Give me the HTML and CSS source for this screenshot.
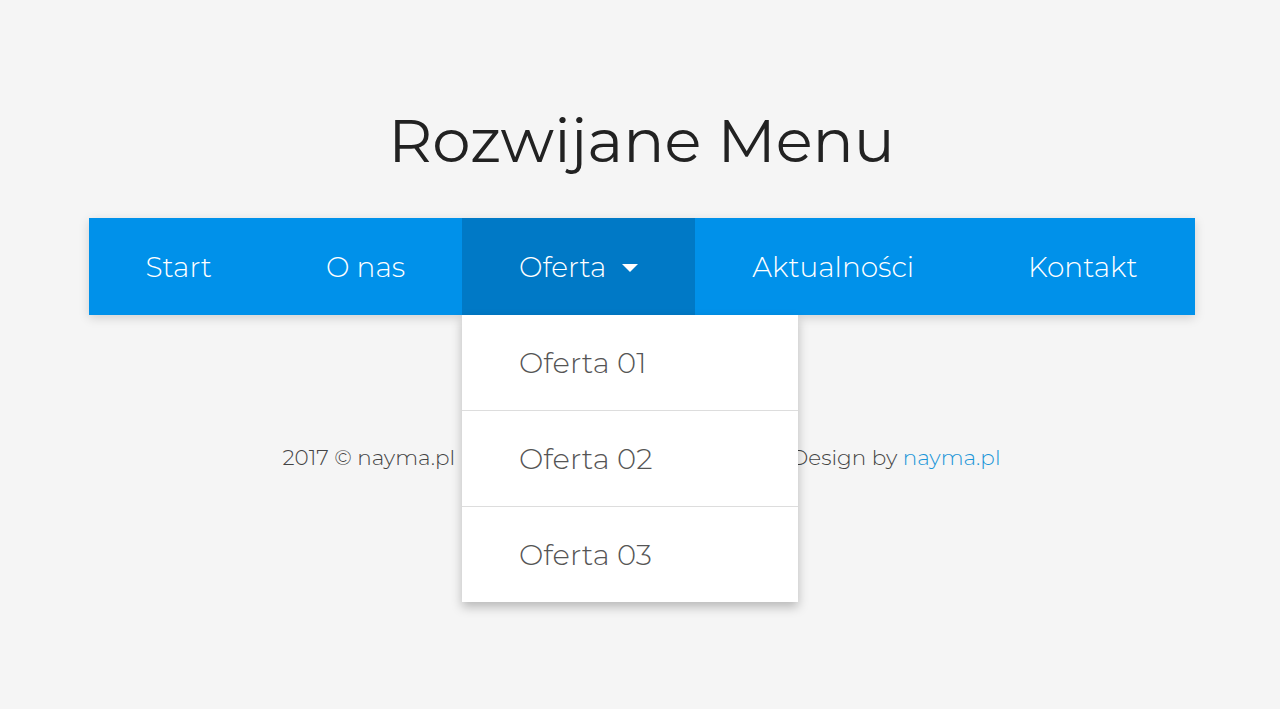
FILE: index.html
```html
<!DOCTYPE html>
<html lang="pl">
<head>
  <meta charset="UTF-8">
  <meta name="viewport" content="width=device-width, initial-scale=1.0">
  <title>Rozwijane Menu</title>
  <link rel="stylesheet" href="styles.css">
</head>
<body>
  <h1 class="title">Rozwijane Menu</h1>

  <nav class="menu">
    <ul class="menu-list">
      <li class="menu-item"><a href="#">Start</a></li>
      <li class="menu-item"><a href="#">O nas</a></li>
      <li class="menu-item has-sub open">
        <a href="#">Oferta <span class="caret"></span></a>
        <ul class="submenu">
          <li><a href="#">Oferta 01</a></li>
          <li><a href="#">Oferta 02</a></li>
          <li><a href="#">Oferta 03</a></li>
        </ul>
      </li>
      <li class="menu-item"><a href="#">Aktualności</a></li>
      <li class="menu-item"><a href="#">Kontakt</a></li>
    </ul>
  </nav>

  <footer class="footer">
    <span>2017 © nayma.pl</span>
    <span>Design by <a href="#">nayma.pl</a></span>
  </footer>
</body>
</html>
```

FILE: styles.css
```css
* {
  box-sizing: border-box;
}

body {
  margin: 0;
  padding: 104px 0 0 3px;
  min-height: 100vh;
  background-color: #f5f5f5;
  font-family: 'Montserrat', 'Inter', 'DejaVu Sans', sans-serif;
  color: #222;
}

a {
  text-decoration: none;
}

.title {
  margin: 0 0 42px;
  text-align: center;
  font-size: 61px;
  font-weight: 400;
  line-height: 72px;
  color: #222;
}

.menu {
  width: 1106px;
  margin: 0 auto;
  background-color: #0091ea;
  box-shadow: 0 3px 10px rgba(0, 0, 0, 0.15);
}

.menu-list {
  display: flex;
  margin: 0;
  padding: 0;
  list-style: none;
}

.menu-item {
  position: relative;
  flex: 1 1 auto;
}

.menu-item > a {
  display: flex;
  justify-content: center;
  align-items: center;
  gap: 16px;
  height: 97px;
  padding: 0 50px;
  color: #fff;
  font-size: 28px;
  font-weight: 300;
}

.has-sub.open > a {
  background-color: #0079c6;
}

.caret {
  width: 0;
  height: 0;
  border-left: 8px solid transparent;
  border-right: 8px solid transparent;
  border-top: 8px solid #fff;
  margin-top: 2px;
}

.submenu {
  position: absolute;
  top: 97px;
  left: 0;
  width: 336px;
  margin: 0;
  padding: 0;
  list-style: none;
  background-color: #fff;
  box-shadow: 0 5px 10px rgba(0, 0, 0, 0.25);
  z-index: 10;
}

.submenu li + li {
  border-top: 1px solid #ddd;
}

.submenu a {
  display: flex;
  align-items: center;
  height: 95px;
  padding: 0 57px;
  color: #555;
  font-size: 29px;
  font-weight: 300;
}

.footer {
  display: flex;
  justify-content: space-between;
  width: 718px;
  margin: 129px auto 0;
  font-size: 21.5px;
  font-weight: 300;
  line-height: 26px;
  color: #444;
}

.footer a {
  color: #1a96d8;
}
```
